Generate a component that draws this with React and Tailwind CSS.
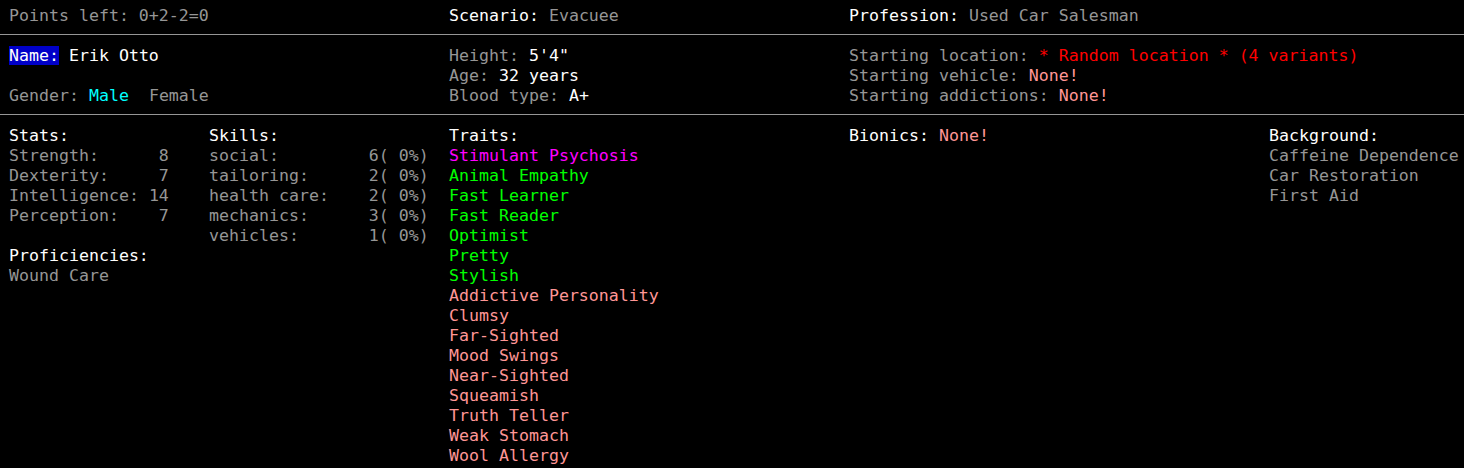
const gray = "text-[#969696]";
const white = "text-white";
const pink = "text-[#ff9696]";
const green = "text-[#00ff00]";

function Line({ children, className = "" }) {
  return <div className={`h-[20px] pt-[2px] leading-[20px] whitespace-pre ${className}`}>{children}</div>;
}

function Separator() {
  return (
    <div className="h-[20px] pt-[10px]">
      <div className="h-px bg-[#969696]" />
    </div>
  );
}

const stats = [
  ["Strength:      ", "8"],
  ["Dexterity:     ", "7"],
  ["Intelligence: ", "14"],
  ["Perception:    ", "7"],
];

const skills = [
  ["social:         ", "6( 0%)"],
  ["tailoring:      ", "2( 0%)"],
  ["health care:    ", "2( 0%)"],
  ["mechanics:      ", "3( 0%)"],
  ["vehicles:       ", "1( 0%)"],
];

const traits = [
  ["Stimulant Psychosis", "text-[#ff00ff]"],
  ["Animal Empathy", green],
  ["Fast Learner", green],
  ["Fast Reader", green],
  ["Optimist", green],
  ["Pretty", green],
  ["Stylish", green],
  ["Addictive Personality", pink],
  ["Clumsy", pink],
  ["Far-Sighted", pink],
  ["Mood Swings", pink],
  ["Near-Sighted", pink],
  ["Squeamish", pink],
  ["Truth Teller", pink],
  ["Weak Stomach", pink],
  ["Wool Allergy", pink],
];

const background = ["Caffeine Dependence", "Car Restoration", "First Aid"];

export default function App() {
  return (
    <div
      className="w-[1464px] h-[468px] bg-black overflow-hidden pt-[4px] text-[16.6px]"
      style={{ fontFamily: '"DejaVu Sans Mono", "Liberation Mono", monospace' }}
    >
      {/* header */}
      <div className="flex pl-[9px]">
        <Line className={`w-[440px] ${gray}`}>Points left: 0+2-2=0</Line>
        <Line className="w-[400px]">
          <span className={white}>Scenario: </span>
          <span className={gray}>Evacuee</span>
        </Line>
        <Line>
          <span className={white}>Profession: </span>
          <span className={gray}>Used Car Salesman</span>
        </Line>
      </div>
      <Separator />

      {/* identity */}
      <div className="flex pl-[9px]">
        <div className="w-[440px]">
          <Line>
            <span className="bg-[#0000c8] text-white">Name:</span>
            <span className={white}> Erik Otto</span>
          </Line>
          <Line />
          <Line className={gray}>
            Gender: <span className="text-[#00ffff]">Male</span>  Female
          </Line>
        </div>
        <div className="w-[400px]">
          <Line className={gray}>
            Height: <span className={white}>5'4"</span>
          </Line>
          <Line className={gray}>
            Age: <span className={white}>32 years</span>
          </Line>
          <Line className={gray}>
            Blood type: <span className={white}>A+</span>
          </Line>
        </div>
        <div>
          <Line className={gray}>
            Starting location: <span className="text-[#ff0000]">* Random location * (4 variants)</span>
          </Line>
          <Line className={gray}>
            Starting vehicle: <span className={pink}>None!</span>
          </Line>
          <Line className={gray}>
            Starting addictions: <span className={pink}>None!</span>
          </Line>
        </div>
      </div>
      <Separator />

      {/* details */}
      <div className="flex pl-[9px]">
        <div className="w-[200px]">
          <Line className={white}>Stats:</Line>
          {stats.map(([k, v]) => (
            <Line key={k} className={gray}>
              {k}
              {v}
            </Line>
          ))}
          <Line />
          <Line className={white}>Proficiencies:</Line>
          <Line className={gray}>Wound Care</Line>
        </div>
        <div className="w-[240px]">
          <Line className={white}>Skills:</Line>
          {skills.map(([k, v]) => (
            <Line key={k} className={gray}>
              {k}
              {v}
            </Line>
          ))}
        </div>
        <div className="w-[400px]">
          <Line className={white}>Traits:</Line>
          {traits.map(([t, c]) => (
            <Line key={t} className={c}>
              {t}
            </Line>
          ))}
        </div>
        <div className="w-[420px]">
          <Line>
            <span className={white}>Bionics: </span>
            <span className={pink}>None!</span>
          </Line>
        </div>
        <div>
          <Line className={white}>Background:</Line>
          {background.map((b) => (
            <Line key={b} className={gray}>
              {b}
            </Line>
          ))}
        </div>
      </div>
    </div>
  );
}
